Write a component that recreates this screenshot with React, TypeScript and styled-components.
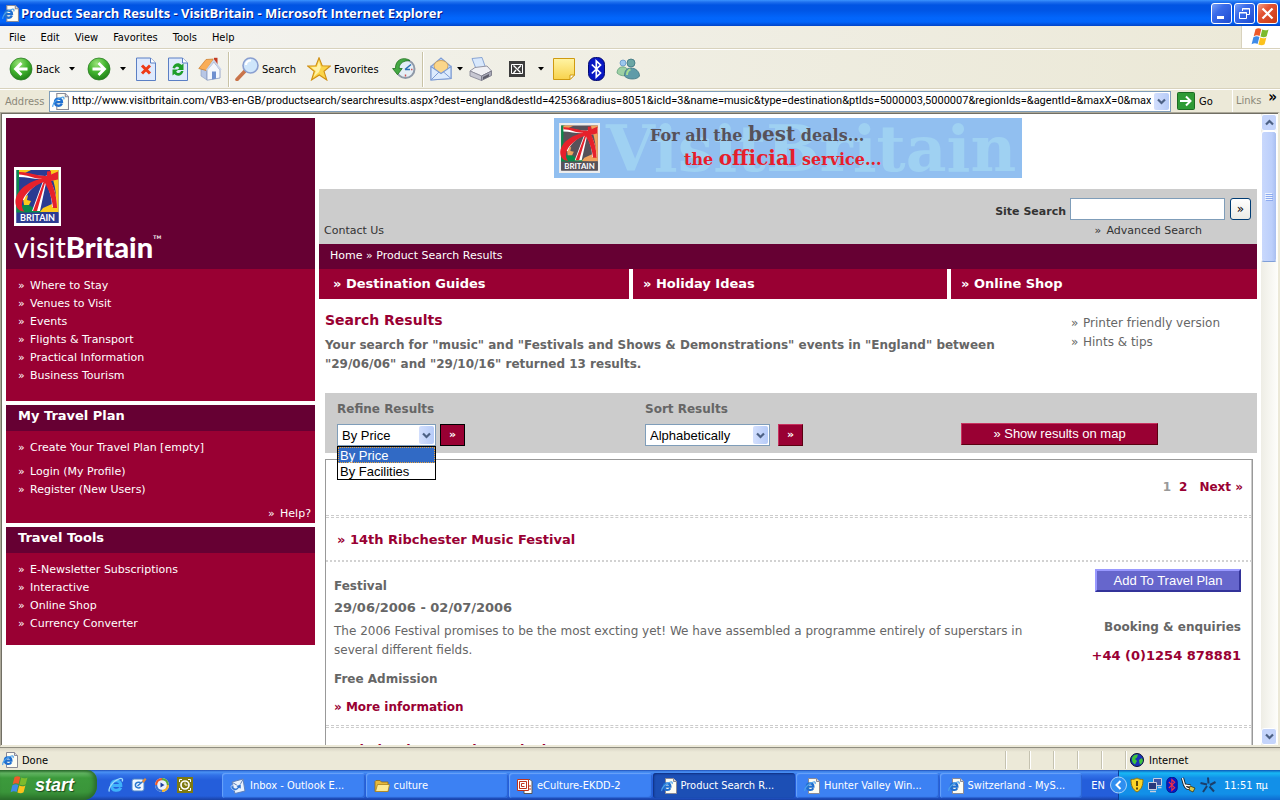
import React from "react";
import styled, { createGlobalStyle } from "styled-components";

const verdana = `Verdana, "DejaVu Sans", sans-serif`;
const tahoma = `Tahoma, "DejaVu Sans Condensed", "DejaVu Sans", sans-serif`;
const arial = `Arial, "Liberation Sans", sans-serif`;
const trebuchet = `"Trebuchet MS", "Open Sans", sans-serif`;
const slab = `"DejaVu Serif", serif`;

const GlobalStyle = createGlobalStyle`
  * { box-sizing: border-box; }
  body { margin: 0; background: #fff; font-family: ${verdana}; }
  button, input, select { font: inherit; color: inherit; margin: 0; }
  a { color: inherit; text-decoration: none; }
  a:hover { text-decoration: underline; }
  h1, h2, h3, p, ul { margin: 0; padding: 0; }
  ul { list-style: none; }
  svg { display: block; flex: none; }
`;

/* ---------- browser window ---------- */

const Desktop = styled.div`
  display: flex;
  flex-direction: column;
  height: 100vh;
  overflow: hidden;
  font-family: ${tahoma};
  font-size: 11px;
  color: #000;
`;

const TitleBar = styled.header`
  display: flex;
  align-items: center;
  gap: 2px;
  height: 26px;
  flex: none;
  padding: 0 2px;
  background: linear-gradient(#3a93ff 0, #1f70ee 2px, #0054e3 5px, #0055e5 10px, #0266fc 18px, #0265fb 22px, #0144c8 26px);
`;

const WindowTitle = styled.h1`
  flex: 1;
  font: bold 13px/20px ${trebuchet};
  color: #fff;
  text-shadow: 1px 1px 0 #0a1883;
`;

const CaptionButton = styled.button<{ $close?: boolean }>`
  display: flex;
  align-items: center;
  justify-content: center;
  width: 21px;
  height: 21px;
  padding: 0;
  border: 1px solid #fff;
  border-radius: 3px;
  background: ${(p) =>
    p.$close
      ? "linear-gradient(135deg, #f0a088, #e35434 35%, #c83a14)"
      : "linear-gradient(135deg, #7aa0f5, #3a6cea 35%, #1e4cd0)"};
`;

const MenuBar = styled.nav`
  display: flex;
  align-items: stretch;
  height: 23px;
  flex: none;
  border-bottom: 1px solid #d8d2bd;
  background: linear-gradient(90deg, #f4f4f2, #ece9d8);
`;

const MenuItems = styled.ul`
  display: flex;
  align-items: center;
  flex: 1;
  gap: 15px;
  padding-left: 9px;
`;

const PlainButton = styled.button`
  padding: 0;
  border: 0;
  background: none;
`;

const BrandCell = styled.div`
  display: flex;
  align-items: center;
  justify-content: center;
  width: 39px;
  border-left: 1px solid #d8d2bd;
  background: #fff;
`;

const ToolBar = styled.div`
  display: flex;
  align-items: center;
  height: 40px;
  flex: none;
  padding-left: 5px;
  border-top: 1px solid #fff;
  border-bottom: 1px solid #d8d2bd;
  background: linear-gradient(90deg, #f4f4f0, #ebe8d6);
`;

const ToolButton = styled.button<{ $w: number; $align?: string }>`
  display: flex;
  align-items: center;
  justify-content: ${(p) => p.$align ?? "center"};
  gap: 3px;
  width: ${(p) => p.$w}px;
  height: 32px;
  padding: 0 4px;
  border: 0;
  background: none;
  flex: none;
`;

const DropButton = styled.button<{ $w: number }>`
  display: flex;
  justify-content: center;
  width: ${(p) => p.$w}px;
  padding: 0;
  border: 0;
  background: none;
  flex: none;
`;

const BarDivider = styled.span`
  width: 2px;
  height: 35px;
  margin: 0 1px 0 2px;
  border-left: 1px solid #c9c3a6;
  border-right: 1px solid #fff;
`;

const AddressBar = styled.form`
  display: flex;
  align-items: center;
  height: 23px;
  flex: none;
  padding-left: 5px;
  border-top: 1px solid #fff;
  background: #ece9d8;
`;

const AddressLabel = styled.label`
  width: 44px;
  color: #8b8878;
`;

const AddressCombo = styled.div`
  display: flex;
  align-items: center;
  flex: 1;
  min-width: 0;
  height: 21px;
  gap: 3px;
  padding: 0 1px 0 2px;
  border: 1px solid #7f9db9;
  background: #fff;
`;

const AddressInput = styled.input`
  flex: 1;
  min-width: 0;
  padding: 0;
  border: 0;
  outline: 0;
  background: none;
  font: 11px/16px Tahoma, Roboto, sans-serif;
`;

const ArrowBox = styled.span<{ $h: number }>`
  display: flex;
  align-items: center;
  justify-content: center;
  width: 15px;
  height: ${(p) => p.$h}px;
  border-radius: 2px;
  background: linear-gradient(90deg, #d3dffd, #b6cbf8);
  flex: none;
`;

const GoButton = styled.button`
  display: flex;
  align-items: center;
  gap: 4px;
  width: 61px;
  padding: 0 0 0 6px;
  border: 0;
  background: none;
`;

const LinksCell = styled.div`
  display: flex;
  width: 48px;
  height: 22px;
  padding: 0 3px;
  justify-content: space-between;
  line-height: 22px;
  border-left: 1px solid #fff;
  color: #8b8878;
  strong { color: #000; font-size: 15px; line-height: 14px; }
`;

const Viewport = styled.div`
  display: flex;
  flex: 1;
  min-height: 0;
  border: solid #aca899;
  border-width: 1px 2px 2px 1px;
  border-right-color: #ece9d8;
  border-bottom-color: #ece9d8;
  box-shadow: inset 1px 1px 0 #716f64;
  background: #fff;
`;

const PageArea = styled.div`
  display: grid;
  grid-template-columns: 309px minmax(0, 1fr);
  column-gap: 4px;
  align-items: start;
  flex: 1;
  min-width: 0;
  overflow: hidden;
  margin: 1px 0 0 1px;
  padding: 4px 4px 0 4px;
  font-family: ${verdana};
`;

const ScrollTrack = styled.div`
  display: flex;
  flex-direction: column;
  width: 17px;
  flex: none;
  margin-top: 1px;
  padding-right: 1px;
  background: linear-gradient(90deg, #eeede5, #fefefb);
`;

const ScrollButton = styled.button`
  display: flex;
  align-items: center;
  justify-content: center;
  height: 17px;
  flex: none;
  padding: 0;
  border: 1px solid #fff;
  border-radius: 3px;
  background: #c4d4fb;
`;

const ScrollThumb = styled.div`
  display: flex;
  flex-direction: column;
  align-items: center;
  justify-content: center;
  height: 131px;
  border: 1px solid #fff;
  border-bottom: 1px solid #7f9fd8;
  border-radius: 3px;
  background: linear-gradient(90deg, #c9d8fc, #bccffb 70%, #a9bff0);
`;

const ScrollSpace = styled.div`
  flex: 1;
`;

/* ---------- left column ---------- */

const Sidebar = styled.aside`
  display: flex;
  flex-direction: column;
  gap: 4px;
  font-size: 11px;
  line-height: 18px;
  color: #fff;
`;

const SideBlock = styled.section`
  background: #990033;
`;

const SideBrand = styled.div`
  height: 151px;
  padding: 49px 8px 0;
  background: #660033;
`;

const WordMark = styled.div`
  display: flex;
  align-items: flex-start;
  margin-top: 4px;
  font: 400 29px/34px Lato, sans-serif;
  b { font-weight: 900; }
  sup { padding-top: 3px; font: 400 12px/14px Lato, sans-serif; }
`;

const SideTitle = styled.h2`
  height: 26px;
  padding-left: 12px;
  font-size: 13px;
  line-height: 21px;
  background: #660033;
`;

const SideList = styled.ul<{ $bottom: number }>`
  padding: 8px 4px ${(p) => p.$bottom}px 12px;
`;

const SideItem = styled.li<{ $gapAfter?: boolean; $end?: boolean }>`
  display: flex;
  justify-content: ${(p) => (p.$end ? "flex-end" : "flex-start")};
  padding-bottom: ${(p) => (p.$gapAfter ? 6 : 0)}px;
`;

const Chevron = styled.span`
  display: inline-block;
  width: 12px;
`;

/* ---------- main column ---------- */

const Main = styled.main`
  min-width: 0;
  color: #666;
  font-size: 12px;
  line-height: 19px;
`;

const BannerLink = styled.a`
  display: block;
  width: 468px;
  height: 60px;
  margin: 0 auto 11px;
`;

const UtilityBar = styled.div`
  height: 55px;
  padding: 9px 6px 0 5px;
  background: #ccc;
  color: #333;
  font-size: 11px;
  line-height: 20px;
`;

const SearchForm = styled.form`
  display: flex;
  align-items: center;
  justify-content: flex-end;
  height: 22px;
  label { margin-right: 4px; padding-top: 6px; font-weight: bold; }
`;

const SearchInput = styled.input`
  width: 155px;
  height: 22px;
  margin-right: 5px;
  padding: 0 3px;
  border: 1px solid #7f9db9;
  background: #fff;
`;

const SearchButton = styled.button`
  width: 21px;
  height: 22px;
  padding: 0;
  border: 1px solid #003c74;
  border-radius: 3px;
  background: linear-gradient(#fff, #ecebe5);
  color: #000;
  font-size: 12px;
`;

const UtilityLinks = styled.div`
  display: flex;
  justify-content: space-between;
  padding: 1px 49px 0 0;
`;

const Breadcrumb = styled.nav`
  height: 25px;
  padding-left: 11px;
  background: #660033;
  color: #fff;
  font-size: 11px;
  line-height: 23px;
`;

const Tabs = styled.nav`
  display: grid;
  grid-template-columns: 310fr 314fr 306fr;
  gap: 4px;
`;

const Tab = styled.a`
  padding-left: 10px;
  background: #990033;
  color: #fff;
  font-weight: bold;
  font-size: 13px;
  line-height: 30px;
  &:first-child { padding-left: 14px; }
`;

const Results = styled.div`
  padding-left: 6px;
`;

const ResultsHead = styled.div`
  display: flex;
  justify-content: space-between;
  padding-top: 12px;
  margin-bottom: 19px;
`;

const ResultsTitle = styled.h2`
  margin-bottom: 6px;
  color: #990033;
  font-size: 14px;
  line-height: 19px;
`;

const Summary = styled.p`
  max-width: 700px;
  font-weight: bold;
`;

const PageTools = styled.ul`
  width: 186px;
  padding-top: 3px;
  flex: none;
`;

const FilterBar = styled.div`
  display: grid;
  grid-template-columns: 308fr 316fr 296fr;
  height: 60px;
  padding: 7px 0 0 12px;
  background: #ccc;
`;

const FilterGroup = styled.form`
  label { display: block; margin-bottom: 6px; font-weight: bold; line-height: 18px; }
`;

const FilterControls = styled.div<{ $gap: number }>`
  display: flex;
  gap: ${(p) => p.$gap}px;
`;

const SelectBox = styled.div<{ $w: number }>`
  position: relative;
  display: flex;
  align-items: center;
  width: ${(p) => p.$w}px;
  height: 22px;
  padding-right: 1px;
  border: 1px solid #7f9db9;
  background: #fff;
  color: #000;
  font: 13px/16px ${arial};
`;

const Select = styled.select`
  appearance: none;
  flex: 1;
  min-width: 0;
  padding: 1px 0 0 4px;
  border: 0;
  outline: 0;
  background: none;
`;

const OptionList = styled.ul`
  position: absolute;
  left: -1px;
  top: 21px;
  right: -1px;
  border: 1px solid #000;
  background: #fff;
`;

const OptionItem = styled.li<{ $active?: boolean }>`
  height: 16px;
  padding-left: 2px;
  line-height: 17px;
  color: ${(p) => (p.$active ? "#fff" : "#000")};
  background: ${(p) => (p.$active ? "#316ac5" : "#fff")};
  outline: ${(p) => (p.$active ? "1px dotted #e8a33d" : "none")};
  outline-offset: -1px;
`;

const CrimsonButton = styled.button<{ $focus?: boolean }>`
  width: 25px;
  height: 22px;
  padding: 0;
  border: 1px solid;
  border-color: ${(p) => (p.$focus ? "#000" : "#c8325f #5a0010 #5a0010 #c8325f")};
  background: #990033;
  color: #fff;
  font: bold 11px/18px ${verdana};
`;

const MapButton = styled(CrimsonButton)`
  width: 197px;
  margin-top: 23px;
  font: 13px/18px ${arial};
`;

const ResultList = styled.div`
  margin: 6px 4px 0 0;
  border: 1px solid #999;
  border-bottom: 0;
  box-shadow: inset -1px 0 0 #ccc;
`;

const Pager = styled.nav`
  display: flex;
  justify-content: flex-end;
  height: 55px;
  padding-right: 9px;
  line-height: 55px;
  font-weight: bold;
  color: #990033;
  span { color: #999; margin-right: 8px; }
  a + a { margin-left: 12px; }
`;

const DashRule = styled.hr`
  height: 3px;
  margin: 0;
  border: 0 dashed #ccc;
  border-width: 1px 0;
`;

const DotRule = styled.hr`
  height: 2px;
  margin: 0;
  border: 0;
  background: repeating-linear-gradient(90deg, #d2d2d2 0 2px, transparent 2px 4px);
`;

const EntryTitle = styled.h3`
  height: 42px;
  padding: 1px 0 0 11px;
  color: #990033;
  font-size: 13px;
  line-height: 42px;
`;

const EntryBody = styled.div`
  display: flex;
  justify-content: space-between;
  padding: 7px 11px 8px 8px;
`;

const EntryText = styled.div`
  max-width: 724px;
  padding-top: 6px;
`;

const Strong = styled.p<{ $lh?: number }>`
  font-weight: bold;
  line-height: ${(p) => p.$lh ?? 19}px;
`;

const Dates = styled(Strong)`
  font-size: 13px;
`;

const Description = styled.p`
  margin: 3px 0 10px;
`;

const MoreLink = styled.a`
  display: block;
  margin-top: 9px;
  color: #990033;
  font-weight: bold;
`;

const EntrySide = styled.div`
  display: flex;
  flex-direction: column;
  align-items: flex-end;
  flex: none;
  gap: 9px;
`;

const PlanButton = styled.button`
  width: 146px;
  height: 23px;
  margin-bottom: 17px;
  padding: 0;
  border: 2px solid;
  border-color: #9999ff #333399 #333399 #9999ff;
  background: #6666cc;
  color: #fff;
  font: 13px/18px ${arial};
`;

const Phone = styled.p`
  color: #990033;
  font-size: 13px;
  font-weight: bold;
`;

/* ---------- status bar and task bar ---------- */

const StatusBar = styled.footer`
  display: flex;
  height: 23px;
  flex: none;
  padding-top: 2px;
  line-height: 21px;
  border-top: 1px solid #8f8d80;
  background: linear-gradient(#d8d4c4, #ece9d8 4px);
`;

const StatusText = styled.div`
  display: flex;
  align-items: center;
  flex: 1;
  gap: 4px;
  padding-left: 2px;
`;

const StatusCell = styled.div<{ $w: number }>`
  display: flex;
  align-items: center;
  gap: 5px;
  width: ${(p) => p.$w}px;
  padding-left: 4px;
  margin: 1px 0;
  border-left: 1px solid #c5c2b0;
  box-shadow: inset 1px 0 0 #fff;
`;

const TaskBar = styled.nav`
  display: flex;
  align-items: stretch;
  height: 30px;
  flex: none;
  background: linear-gradient(#1f4fb8 0, #4a92f5 2px, #3272e8 5px, #245edb 10px, #245edb 26px, #1941a5);
  color: #fff;
`;

const StartButton = styled.button`
  display: flex;
  align-items: center;
  gap: 5px;
  width: 97px;
  padding: 0 0 1px 10px;
  border: 0;
  border-radius: 0 10px 14px 0;
  background: linear-gradient(#2a6a2c 0, #64b764 3px, #3c9a3c 8px, #3a953a 22px, #2a702a);
  box-shadow: inset -3px 0 4px #2a6a2c;
  color: #fff;
  font: italic bold 18px/24px "Franklin Gothic Medium", "Liberation Sans", sans-serif;
  text-shadow: 1px 1px 1px #1c4a1c;
`;

const QuickLaunch = styled.div`
  display: flex;
  align-items: center;
  gap: 7px;
  width: 125px;
  padding-left: 11px;
`;

const TaskList = styled.div`
  display: flex;
  flex: 1;
  min-width: 0;
  gap: 1px;
  padding: 3px 0 2px;
`;

const Task = styled.button<{ $active?: boolean }>`
  display: flex;
  align-items: center;
  flex: 1;
  min-width: 0;
  gap: 4px;
  padding: 0 8px;
  border: 0;
  border-radius: 3px;
  background: ${(p) => (p.$active ? "#1c4fb5" : "#3c81f3")};
  box-shadow: ${(p) => (p.$active ? "inset 1px 1px 2px #0f2f80" : "inset 1px 1px 1px #6aa4fa, inset -1px -1px 1px #2a62d0")};
  color: #fff;
`;

const Language = styled.div`
  display: flex;
  align-items: center;
  justify-content: center;
  width: 36px;
  padding-right: 4px;
`;

const Tray = styled.div`
  display: flex;
  align-items: center;
  gap: 2px;
  width: 162px;
  background: linear-gradient(#0c59b9 0, #18b8f4 3px, #1290e8 8px, #1290e8 24px, #0e6ad0);
  border-left: 1px solid #0b3f9a;
  > svg:first-child { margin-left: -9px; }
  time { margin-left: 5px; }
`;

/* ---------- drawings ---------- */

const Down = ({ color = "#000" }: { color?: string }) => (
  <svg width="6" height="4" viewBox="0 0 6 4"><path d="M0 0h6L3 3.4z" fill={color} /></svg>
);

const Chev = ({ up }: { up?: boolean }) => (
  <svg width="9" height="7" viewBox="0 0 9 7">
    <path d={up ? "M1 5.5L4.5 2L8 5.5" : "M1 1.5L4.5 5L8 1.5"} fill="none" stroke="#4d6185" strokeWidth="2.2" />
  </svg>
);

const ESwirl = ({ size = 16 }: { size?: number }) => (
  <svg width={size} height={size} viewBox="0 0 16 16">
    <path d="M3.4 8.4h9.4C12.800 2.200 3.600 2.200 3.500 8.400c0 6 7.600 6 9.200 2.200" fill="none" stroke="#3fb2fa" strokeWidth="3" />
    <path d="M1.500 14.500C-.5 11.500 5.500 3.500 11 1.800c3.500-1.200 4 .5 3.200 2.600" fill="none" stroke="#9adafb" strokeWidth="1.400" />
  </svg>
);

const PageIE = ({ size = 16 }: { size?: number }) => (
  <svg width={size} height={size} viewBox="0 0 16 16">
    <path d="M4.500.5h8l3 3v12h-11z" fill="#fdfcf2" stroke="#8a8a96" />
    <path d="M12.500.5v3h3" fill="#d5d9e4" stroke="#8a8a96" />
    <path d="M2.800 8.600h6.600c0-4.400-6.600-4.400-6.600 0 0 4.200 5.200 4.200 6.500 1.600" fill="none" stroke="#1f6fd0" strokeWidth="2.200" />
    <path d="M.8 13C0 10 5 5 9.500 4c2-.4 2 .8 1.500 2" fill="none" stroke="#4aa0ea" strokeWidth="1.100" />
  </svg>
);

const XpFlag = ({ size = 20 }: { size?: number }) => (
  <svg width={size} height={size} viewBox="0 0 20 20">
    <path d="M4.500 2.200c2-1.400 4-1.200 5.800-.2L8.600 9C6.800 8 5 8 2.700 9.200z" fill="#ee5a2a" />
    <path d="M11.200 2.600c2 1 4.200 1 6.300-.1l-1.800 6.800c-2 1.200-4.200 1-6.200.1z" fill="#7cbb2d" />
    <path d="M2.400 10.200c2.200-1.200 4.200-1.200 6-.2l-1.800 7c-1.800-1-3.800-1-6 .2z" fill="#3f8be8" />
    <path d="M9.200 10.500c2 1 4.200 1 6.200-.1l-1.800 6.900c-2 1.200-4.200 1-6.200.1z" fill="#fcc21c" />
  </svg>
);

const RoundArrow = ({ flip, id }: { flip?: boolean; id: string }) => (
  <svg width="24" height="24" viewBox="0 0 24 24">
    <defs>
      <radialGradient id={id} cx=".4" cy=".25" r=".8">
        <stop offset="0" stopColor="#9be27a" /><stop offset=".5" stopColor="#43b52f" /><stop offset="1" stopColor="#1d7d16" />
      </radialGradient>
    </defs>
    <circle cx="12" cy="12" r="11" fill={`url(#${id})`} stroke="#2f7d27" strokeWidth=".8" />
    <path transform={flip ? "translate(24 0) scale(-1 1)" : undefined} d="M18.500 12H7M12.500 6L6.500 12l6 6" fill="none" stroke="#fff" strokeWidth="2.800" />
  </svg>
);

const DocShape = ({ children }: { children: React.ReactNode }) => (
  <svg width="20" height="24" viewBox="0 0 20 24">
    <path d="M.5 1h14l5 5v17.500H.5z" fill="#dfeafd" stroke="#5b7fc4" />
    <path d="M14.500 1v5h5" fill="#fff" stroke="#5b7fc4" />
    {children}
  </svg>
);

const HomeIcon = () => (
  <svg width="24" height="24" viewBox="0 0 24 24">
    <path d="M16 .8h3.500v7H16z" fill="#c23a22" />
    <path d="M3 12l6 1v10l-6-4z" fill="#b7c6e6" stroke="#8798c0" strokeWidth=".6" />
    <path d="M9 13l7-8 6 8v8l-13 2.200z" fill="#f4f7fd" stroke="#8798c0" strokeWidth=".8" />
    <path d="M14 14.500h4v7.200l-4 .7z" fill="#6f8fcf" />
    <path d="M.8 11.500L8 2.500 15.500 2 8.200 13.500z" fill="#f9ad58" stroke="#c97a28" strokeWidth=".7" />
    <path d="M8.500 13.500L15.800 3.500 23 13" fill="none" stroke="#c9d4ea" strokeWidth="1.800" />
  </svg>
);

const SearchGlass = () => (
  <svg width="24" height="24" viewBox="0 0 24 24">
    <path d="M2 22.500l8-8.500" stroke="#c9744a" strokeWidth="3.600" strokeLinecap="round" />
    <circle cx="15.500" cy="8.500" r="7.500" fill="#cfe6fb" stroke="#8a9fd0" strokeWidth="1.600" />
    <path d="M11 8c0-3 2-4.500 5-4.500" fill="none" stroke="#fff" strokeWidth="2.200" />
  </svg>
);

const StarIcon = () => (
  <svg width="24" height="24" viewBox="0 0 24 24">
    <path d="M12 .8l3.200 8 8.200.2-6.400 5.300L19.800 23 12.300 18 4.500 23l2.700-8.600L.6 9l8.300-.2z" fill="#fbd54a" stroke="#cf8f14" strokeWidth="1.100" />
    <path d="M12 4l1.800 6.200L12 15 6.500 20l2.300-6L4 10.200l5.800-.2z" fill="#fff2a8" />
  </svg>
);

const HistoryIcon = () => (
  <svg width="24" height="24" viewBox="0 0 24 24">
    <circle cx="13.500" cy="12" r="9" fill="#e4eef6" stroke="#8f99a8" strokeWidth="2" />
    <path d="M13 12.500l6-5M13 12.500h5" stroke="#2c6fb5" strokeWidth="1.500" />
    <path d="M18 3.500C11-1 3 3 3.500 11.500H.6l4.900 6.200 4.700-6.200H7.200C7 6 12 3.500 18 3.500z" fill="#45a843" stroke="#1f7420" strokeWidth=".8" />
    <path d="M13.500 19.500v-2M20.500 12.500h-1.500" stroke="#d05050" strokeWidth="1.400" />
  </svg>
);

const MailIcon = () => (
  <svg width="22" height="24" viewBox="0 0 22 24">
    <path d="M1 9.500L11 1l10 8.500v12L1 23z" fill="#c7dcf8" stroke="#7d9cd4" strokeWidth="1.100" />
    <path d="M4 8C6 2 16 2 18 8l-1 6-6 3-6-3z" fill="#fbd68a" stroke="#cf9a4a" strokeWidth=".8" />
    <path d="M1 9.500l10 7 10-7v12L1 23z" fill="#dcebfd" stroke="#7d9cd4" strokeWidth="1.100" />
    <path d="M1 23l8-8M21 21.500l-8-7" stroke="#7d9cd4" />
  </svg>
);

const PrinterIcon = () => (
  <svg width="24" height="24" viewBox="0 0 24 24">
    <path d="M3 1.500l10-1 3.500 10-9 2.500z" fill="#d8e8fc" stroke="#7f9dd0" strokeWidth=".9" />
    <path d="M1 14l5-3.500 12-1.500 4.500 5-10 5z" fill="#f1f1f4" stroke="#8a8a98" strokeWidth=".9" />
    <path d="M1 14l11.500 5v4.500L1 19z" fill="#c7c7d2" stroke="#8a8a98" strokeWidth=".9" />
    <path d="M12.500 19l10-5v4.500l-10 5z" fill="#a7a7b6" stroke="#7a7a88" strokeWidth=".9" />
    <path d="M14 20l6-3v2.500l-6 3z" fill="#5d5d6a" />
  </svg>
);

const SquareIcon = () => (
  <svg width="16" height="16" viewBox="0 0 16 16">
    <path d="M0 0h16v16H0z" fill="#3c3c3c" />
    <path d="M2.500 3.500h11v9h-11z" fill="none" stroke="#fff" />
    <path d="M4.500 4.500l7 7M12 4.500L9 7.500M4.500 12L7 9" fill="none" stroke="#fff" strokeWidth="1.300" />
  </svg>
);

const NoteIcon = () => (
  <svg width="22" height="22" viewBox="0 0 22 22">
    <defs>
      <linearGradient id="note" x2="0" y2="1"><stop stopColor="#fff4a4" /><stop offset="1" stopColor="#f8d24c" /></linearGradient>
    </defs>
    <path d="M.5.500h21V17L17 21.500H.5z" fill="url(#note)" stroke="#cf9a10" />
    <path d="M17 21.500V17h4.500z" fill="#fff" stroke="#cf9a10" />
  </svg>
);

const Bluetooth = ({ w = 17, h = 24, color = "#fff" }: { w?: number; h?: number; color?: string }) => (
  <svg width={w} height={h} viewBox="0 0 17 24">
    <rect x=".5" y=".5" width="16" height="23" rx="7" fill="#0818c4" stroke="#040a70" />
    <path d="M3.800 7.500l8.700 8.500-4.200 4V4l4.200 4-8.700 8.500" fill="none" stroke={color} strokeWidth="1.700" />
  </svg>
);

const BuddyIcon = () => (
  <svg width="24" height="22" viewBox="0 0 24 22">
    <circle cx="7" cy="5" r="3" fill="#9cc8ee" stroke="#5a8cc0" strokeWidth=".7" />
    <path d="M1 15c0-8 11-8 11-1v3c-3 1.500-8 1-11-2z" fill="#9ed0a4" stroke="#5a9a78" strokeWidth=".7" />
    <circle cx="15" cy="5" r="4" fill="#6ba6a4" stroke="#3c7480" strokeWidth=".8" />
    <path d="M8.500 18c0-5 2-8 6.500-8s8.500 3.500 8.500 8c-2 4-12 4-15 0z" fill="#5f9ba8" stroke="#3c7480" strokeWidth=".8" />
    <path d="M11 17c0-3 1.500-5 3.500-5.500" fill="none" stroke="#a6dc90" strokeWidth="2" />
  </svg>
);

const GoIcon = () => (
  <svg width="18" height="18" viewBox="0 0 18 18">
    <rect x=".5" y=".5" width="17" height="17" rx="1" fill="#2f9a35" stroke="#1d6b22" />
    <path d="M3 9h10M9 4.500L13.500 9 9 13.500" fill="none" stroke="#fff" strokeWidth="2" />
  </svg>
);

const Globe = () => (
  <svg width="14" height="14" viewBox="0 0 14 14">
    <circle cx="7" cy="7" r="6.500" fill="#1a34b8" stroke="#0a1034" />
    <path d="M2 5c1-3 4-4 6-3.500L7 4.500 5 6l2 2-2 3.500C3 10.500 1.500 8 2 5zM9 7l3-2 1 3-2 3.500-1.500-1z" fill="#3fc43a" />
  </svg>
);

const BritainLogo = ({ muted, width, height }: { muted?: boolean; width: number; height: number }) => {
  const blue = muted ? "#575159" : "#2b3b92";
  const gold = muted ? "#f0a25c" : "#fbc91c";
  return (
    <svg width={width} height={height} viewBox="0 0 47 59" preserveAspectRatio="none">
      <path d="M0 0h47v59H0z" fill={muted ? "#ececec" : "#fff"} />
      <path d="M2.500 3h42v53h-42z" fill={blue} />
      <path d="M2.500 3h4C4 12 6 22 4 45H2.500z" fill="#0a8a4a" />
      <path d="M38 3h6.500v42H33c6-6 9-3 9-14 0-10-3-19-6-28z" fill={gold} />
      <path d="M5 3h12l-6 3H5z" fill={gold} />
      <path d="M2.500 38c4 3 8-2 12 0s8 6 18 5l-6 3h-24z" fill="#0a8a4a" />
      <path d="M9 31l5-3-1 5 4 1-2 4h-5z" fill={gold} />
      <path d="M29 41l9-4 4 3v5H26z" fill={gold} />
      <path d="M31 9C20 9 12 6 5 6v4c8 0 17 3 24 2C18 17 8 24 6 33h4C14 24 22 17 29 14L18 44h8l6-28c4 8 6 16 6 24h5c0-10-3-20-7-26l8-2V6z" fill="#fff" />
      <path d="M33 9C22 9 14 4.500 5 5v2.500c8 0 16 5 23 4C13 15 1 24 1.500 36c.5 5 4 9 9 8.500-7-8 1-22 19-29.500L19 44h4l8-28c4 7 7 15 8 25h4c0-11-3-20-6-27l7-1.500V4.500l-7 3V4l-4 .500z" fill="#e6212b" />
      <path d="M2.500 45.500h42V56h-42z" fill={blue} />
      <text x="23.500" y="54.300" textAnchor="middle" fontFamily="Lato, sans-serif" fontWeight="700" fontSize="9" fill="#fff">BRITAIN</text>
    </svg>
  );
};

const Banner = () => (
  <svg width="468" height="60" viewBox="0 0 468 60" role="img" aria-label="VisitBritain banner">
    <path d="M0 0h468v60H0z" fill="#91bff0" />
    <text x="52" y="53" fontFamily={slab} fontWeight="bold" fontSize="63" fill="#9fd1f2">VisitBritain</text>
    <g transform="translate(5 5)"><BritainLogo muted width={41} height={50} /></g>
    <g fontFamily={slab} fontWeight="bold" fontSize="16">
      <text x="96" y="23" fill="#57525a">For all the <tspan fontSize="20">best</tspan> deals...</text>
      <text x="130" y="47" fill="#e61e2c">the <tspan fontSize="20">official</tspan> service...</text>
    </g>
  </svg>
);

const CaptionGlyph = ({ kind }: { kind: "min" | "restore" | "close" }) => (
  <svg width="15" height="15" viewBox="0 0 15 15" fill="none" stroke="#fff">
    {kind === "min" && <path d="M3 11.500h7" strokeWidth="3" />}
    {kind === "restore" && <path d="M5.500 5V2.500h7v6H10M5 3h8M2.500 6.500h7v6h-7zM2 7h8" />}
    {kind === "close" && <path d="M2.500 2.500l10 10M12.500 2.500l-10 10" strokeWidth="2.200" />}
  </svg>
);

const OutlookIcon = () => (
  <svg width="16" height="16" viewBox="0 0 16 16">
    <path d="M2 4l11-3 2 12-10 2.500z" fill="#e8f1fd" stroke="#5f7fb8" />
    <path d="M2.500 4.500l6.500 4 4-7" fill="none" stroke="#5f7fb8" />
    <path d="M1 8c0 5 6 6 8 2l2 1V6L6 8l1.500 1C6.500 11 3 11 3 7z" fill="#2d72d2" stroke="#fff" strokeWidth=".5" />
  </svg>
);

const FolderIcon = () => (
  <svg width="16" height="16" viewBox="0 0 16 16">
    <path d="M1 3.500l1-1h4l1.500 1.500H14v9.500H1z" fill="#e5b93c" stroke="#8f6b14" strokeWidth=".8" />
    <path d="M3.500 6.500H15.500l-1.500 7H1.500z" fill="#fdeb94" stroke="#a8811e" strokeWidth=".8" />
  </svg>
);

const SlidesIcon = () => (
  <svg width="16" height="16" viewBox="0 0 16 16">
    <path d="M7 1.500h6l2 2v12H7z" fill="#fff" stroke="#555" />
    <path d="M.5 1.500h11v11H.5z" fill="#fff" stroke="#c0341c" />
    <path d="M2.500 3.500h7v7h-7z" fill="#fff" stroke="#c0341c" />
    <path d="M7.500 5.500h-3v3h3M11 8h3M12 11h2" fill="none" stroke="#c0341c" />
  </svg>
);

const DeskIcon = () => (
  <svg width="16" height="16" viewBox="0 0 16 16">
    <rect x="1" y="2" width="12" height="12" rx="2" fill="#f1f7ff" stroke="#4b82c8" />
    <path d="M9.500 5.500C5 4.500 4 7 4.500 9s4 2.500 5 1M6.500 9L14 2.500" fill="none" stroke="#2b78d0" strokeWidth="1.500" />
    <path d="M11 4l3-3 1.500 1.500L12.500 6z" fill="#e08a3c" />
  </svg>
);

const MediaIcon = () => (
  <svg width="16" height="16" viewBox="0 0 16 16">
    <circle cx="8" cy="8" r="7" fill="#fff" />
    <path d="M8 1a7 7 0 0 0-7 7h3a4 4 0 0 1 4-4z" fill="#e8572a" />
    <path d="M8 1a7 7 0 0 1 7 7h-3a4 4 0 0 0-4-4z" fill="#58a838" />
    <path d="M1 8a7 7 0 0 0 7 7v-3a4 4 0 0 1-4-4z" fill="#3a72d0" />
    <path d="M15 8a7 7 0 0 1-7 7v-3a4 4 0 0 0 4-4z" fill="#f0b02c" />
    <circle cx="8" cy="8" r="4.800" fill="#eaf2ff" />
    <path d="M6.500 5.500L10.500 8l-4 2.500z" fill="#1c3f9c" />
  </svg>
);

const ClockIcon = () => (
  <svg width="16" height="16" viewBox="0 0 16 16">
    <path d="M0 0h16v16H0z" fill="#7f7a10" />
    <path d="M5 2.500H2.500V5M11 2.500h2.500V5M5 13.500H2.500V11M11 13.500h2.500V11" fill="none" stroke="#fff" />
    <circle cx="8" cy="8" r="4" fill="none" stroke="#fff" strokeWidth="1.700" />
    <path d="M8 5.500V8h2.500" fill="none" stroke="#fff" />
  </svg>
);

const TrayArrow = () => (
  <svg width="17" height="18" viewBox="0 0 17 18">
    <circle cx="8.500" cy="9" r="8" fill="#2f8ff0" stroke="#b9dcfb" strokeWidth=".9" />
    <path d="M10.500 5L6.500 9l4 4" fill="none" stroke="#fff" strokeWidth="2" />
  </svg>
);

const ShieldIcon = () => (
  <svg width="16" height="16" viewBox="0 0 16 16">
    <path d="M8 1c2 1.200 4 1.500 6 1.500 0 6-1.500 10-6 12.500C3.500 12.500 2 8.500 2 2.500 4 2.500 6 2.200 8 1z" fill="#fbd428" stroke="#8d7412" />
    <path d="M8 4v5M8 10.500v2" stroke="#4a3a08" strokeWidth="1.800" />
  </svg>
);

const NetworkIcon = () => (
  <svg width="16" height="16" viewBox="0 0 16 16">
    <path d="M6.500 1.500h8v7h-8z" fill="#3b54a8" stroke="#c7cede" />
    <path d="M1.500 5.500h8v7h-8z" fill="#28387c" stroke="#c7cede" />
    <path d="M3 14.500h6M11 10.500h3.500" stroke="#c7cede" strokeWidth="1.500" />
  </svg>
);

const PlugIcon = () => (
  <svg width="16" height="16" viewBox="0 0 16 16">
    <path d="M1.500 1l2 7 6 1M3.500 8c2 4 4 4 6 3" fill="none" stroke="#1a1a1a" strokeWidth="3" />
    <path d="M1.500 1l2 7 6 1M3.500 8c2 4 4 4 6 3" fill="none" stroke="#fff" strokeWidth="1.300" />
    <path d="M9 9l5 2-2 4-4-2z" fill="#d9c84a" stroke="#3a3410" strokeWidth=".8" />
  </svg>
);

const BurstIcon = () => (
  <svg width="18" height="18" viewBox="0 0 18 18">
    <path d="M9 1.500l.5 6M1.500 7l6.500 1.500M16.500 6l-5.500 3M4 16l4-6M15 15.500L10.500 10.500" stroke="#1b3f6c" strokeWidth="2" />
  </svg>
);

/* ---------- data ---------- */

const menus = ["File", "Edit", "View", "Favorites", "Tools", "Help"];
const visitLinks = ["Where to Stay", "Venues to Visit", "Events", "Flights & Transport", "Practical Information", "Business Tourism"];
const toolLinks = ["E-Newsletter Subscriptions", "Interactive", "Online Shop", "Currency Converter"];
const url =
  "http://www.visitbritain.com/VB3-en-GB/productsearch/searchresults.aspx?dest=england&destId=42536&radius=8051&icId=3&name=music&type=destination&ptIds=5000003,5000007&regionIds=&agentId=&maxX=0&max";

const SideLink = ({ text, gapAfter, end }: { text: string; gapAfter?: boolean; end?: boolean }) => (
  <SideItem $gapAfter={gapAfter} $end={end}>
    <a href="#"><Chevron>»</Chevron>{text}</a>
  </SideItem>
);

export default function App() {
  return (
    <Desktop>
      <GlobalStyle />
      <TitleBar>
        <PageIE size={17} />
        <WindowTitle>Product Search Results - VisitBritain - Microsoft Internet Explorer</WindowTitle>
        <CaptionButton aria-label="Minimize"><CaptionGlyph kind="min" /></CaptionButton>
        <CaptionButton aria-label="Restore"><CaptionGlyph kind="restore" /></CaptionButton>
        <CaptionButton aria-label="Close" $close><CaptionGlyph kind="close" /></CaptionButton>
      </TitleBar>

      <MenuBar>
        <MenuItems>
          {menus.map((m) => <li key={m}><PlainButton>{m}</PlainButton></li>)}
        </MenuItems>
        <BrandCell><XpFlag /></BrandCell>
      </MenuBar>

      <ToolBar>
        <ToolButton $w={59} $align="flex-start"><RoundArrow id="back" />Back</ToolButton>
        <DropButton $w={15} aria-label="Back history"><Down /></DropButton>
        <ToolButton $w={36} $align="flex-end" aria-label="Forward"><RoundArrow id="forward" flip /></ToolButton>
        <DropButton $w={15} aria-label="Forward history"><Down /></DropButton>
        <ToolButton $w={32} aria-label="Stop">
          <DocShape><path d="M6 8.500l8 8M14 8.500l-8 8" stroke="#ee3a18" strokeWidth="3" /></DocShape>
        </ToolButton>
        <ToolButton $w={32} aria-label="Refresh">
          <DocShape>
            <path d="M4.500 11c1-5 6.500-6 9-3l2-1.500V13H9l2.300-1.800C10 9 7.500 9.500 7 11.500zM15.500 14c-1 5-6.500 6-9 3l-2 1.500V12.500h6l-2.300 2C9.500 17 12.500 16 13 14z" fill="#1f9e2a" />
          </DocShape>
        </ToolButton>
        <ToolButton $w={32} aria-label="Home"><HomeIcon /></ToolButton>
        <BarDivider />
        <ToolButton $w={72} $align="flex-start"><SearchGlass />Search</ToolButton>
        <ToolButton $w={84} $align="flex-start"><StarIcon />Favorites</ToolButton>
        <ToolButton $w={33} aria-label="History"><HistoryIcon /></ToolButton>
        <BarDivider />
        <ToolButton $w={32} aria-label="Mail"><MailIcon /></ToolButton>
        <DropButton $w={5} aria-label="Mail options"><Down /></DropButton>
        <ToolButton $w={37} aria-label="Print"><PrinterIcon /></ToolButton>
        <ToolButton $w={36} aria-label="Edit"><SquareIcon /></ToolButton>
        <DropButton $w={11} aria-label="Edit options"><Down /></DropButton>
        <ToolButton $w={36} aria-label="Discuss"><NoteIcon /></ToolButton>
        <ToolButton $w={28} aria-label="Bluetooth"><Bluetooth /></ToolButton>
        <ToolButton $w={36} aria-label="Messenger"><BuddyIcon /></ToolButton>
      </ToolBar>

      <AddressBar>
        <AddressLabel htmlFor="address">Address</AddressLabel>
        <AddressCombo>
          <PageIE size={17} />
          <AddressInput id="address" defaultValue={url} />
          <ArrowBox $h={17}><Chev /></ArrowBox>
        </AddressCombo>
        <GoButton type="button"><GoIcon />Go</GoButton>
        <LinksCell>Links<strong>»</strong></LinksCell>
      </AddressBar>

      <Viewport>
        <PageArea>
          <Sidebar>
            <SideBlock>
              <SideBrand>
                <BritainLogo width={47} height={59} />
                <WordMark>visit<b>Britain</b><sup>™</sup></WordMark>
              </SideBrand>
              <SideList $bottom={16}>
                {visitLinks.map((t) => <SideLink key={t} text={t} />)}
              </SideList>
            </SideBlock>
            <SideBlock>
              <SideTitle>My Travel Plan</SideTitle>
              <SideList $bottom={0}>
                <SideLink text="Create Your Travel Plan [empty]" gapAfter />
                <SideLink text="Login (My Profile)" />
                <SideLink text="Register (New Users)" gapAfter />
                <SideLink text="Help?" end />
              </SideList>
            </SideBlock>
            <SideBlock>
              <SideTitle>Travel Tools</SideTitle>
              <SideList $bottom={12}>
                {toolLinks.map((t) => <SideLink key={t} text={t} />)}
              </SideList>
            </SideBlock>
          </Sidebar>

          <Main>
            <BannerLink href="#"><Banner /></BannerLink>
            <UtilityBar>
              <SearchForm>
                <label htmlFor="site-search">Site Search</label>
                <SearchInput id="site-search" />
                <SearchButton type="button" aria-label="Search the site">»</SearchButton>
              </SearchForm>
              <UtilityLinks>
                <a href="#">Contact Us</a>
                <a href="#"><Chevron>»</Chevron>Advanced Search</a>
              </UtilityLinks>
            </UtilityBar>
            <Breadcrumb><a href="#">Home</a> » Product Search Results</Breadcrumb>
            <Tabs>
              <Tab href="#">» Destination Guides</Tab>
              <Tab href="#">» Holiday Ideas</Tab>
              <Tab href="#">» Online Shop</Tab>
            </Tabs>

            <Results>
              <ResultsHead>
                <div>
                  <ResultsTitle>Search Results</ResultsTitle>
                  <Summary>
                    Your search for "music" and "Festivals and Shows &amp; Demonstrations" events in "England" between
                    "29/06/06" and "29/10/16" returned 13 results.
                  </Summary>
                </div>
                <PageTools>
                  <li><a href="#"><Chevron>»</Chevron>Printer friendly version</a></li>
                  <li><a href="#"><Chevron>»</Chevron>Hints &amp; tips</a></li>
                </PageTools>
              </ResultsHead>

              <FilterBar>
                <FilterGroup>
                  <label htmlFor="refine">Refine Results</label>
                  <FilterControls $gap={4}>
                    <SelectBox $w={99}>
                      <Select id="refine" defaultValue="By Price">
                        <option>By Price</option>
                        <option>By Facilities</option>
                      </Select>
                      <ArrowBox $h={18}><Chev /></ArrowBox>
                      <OptionList>
                        <OptionItem $active>By Price</OptionItem>
                        <OptionItem>By Facilities</OptionItem>
                      </OptionList>
                    </SelectBox>
                    <CrimsonButton type="button" $focus aria-label="Refine">»</CrimsonButton>
                  </FilterControls>
                </FilterGroup>
                <FilterGroup>
                  <label htmlFor="sort">Sort Results</label>
                  <FilterControls $gap={8}>
                    <SelectBox $w={125}>
                      <Select id="sort" defaultValue="Alphabetically">
                        <option>Alphabetically</option>
                      </Select>
                      <ArrowBox $h={18}><Chev /></ArrowBox>
                    </SelectBox>
                    <CrimsonButton type="button" aria-label="Sort">»</CrimsonButton>
                  </FilterControls>
                </FilterGroup>
                <div>
                  <MapButton type="button">» Show results on map</MapButton>
                </div>
              </FilterBar>

              <ResultList>
                <Pager aria-label="Pages">
                  <span>1</span><a href="#">2</a><a href="#">Next »</a>
                </Pager>
                <DashRule />
                <article>
                  <EntryTitle><a href="#">» 14th Ribchester Music Festival</a></EntryTitle>
                  <DotRule />
                  <EntryBody>
                    <EntryText>
                      <Strong $lh={22}>Festival</Strong>
                      <Dates $lh={22}>29/06/2006 - 02/07/2006</Dates>
                      <Description>
                        The 2006 Festival promises to be the most excting yet! We have assembled a programme entirely of superstars in
                        several different fields.
                      </Description>
                      <Strong>Free Admission</Strong>
                      <MoreLink href="#">» More information</MoreLink>
                    </EntryText>
                    <EntrySide>
                      <PlanButton>Add To Travel Plan</PlanButton>
                      <Strong>Booking &amp; enquiries</Strong>
                      <Phone>+44 (0)1254 878881</Phone>
                    </EntrySide>
                  </EntryBody>
                </article>
                <DashRule />
                <article>
                  <EntryTitle><a href="#">» Cheltenham Music Festival</a></EntryTitle>
                </article>
              </ResultList>
            </Results>
          </Main>
        </PageArea>
        <ScrollTrack>
          <ScrollButton aria-label="Scroll up"><Chev up /></ScrollButton>
          <ScrollThumb>
            <svg width="8" height="8" viewBox="0 0 8 8">
              <path d="M0 .5h7M0 2.500h7M0 4.500h7M0 6.500h7" stroke="#eef4fe" />
              <path d="M1 1.500h7M1 3.500h7M1 5.500h7M1 7.500h7" stroke="#8caaf0" />
            </svg>
          </ScrollThumb>
          <ScrollSpace />
          <ScrollButton aria-label="Scroll down"><Chev /></ScrollButton>
        </ScrollTrack>
      </Viewport>

      <StatusBar>
        <StatusText><PageIE />Done</StatusText>
        <StatusCell $w={24} /><StatusCell $w={24} /><StatusCell $w={24} /><StatusCell $w={24} /><StatusCell $w={24} />
        <StatusCell $w={155}><Globe />Internet</StatusCell>
      </StatusBar>

      <TaskBar>
        <StartButton><XpFlag />start</StartButton>
        <QuickLaunch><ESwirl /><DeskIcon /><MediaIcon /><ClockIcon /></QuickLaunch>
        <TaskList>
          <Task><OutlookIcon />Inbox - Outlook E...</Task>
          <Task><FolderIcon />culture</Task>
          <Task><SlidesIcon />eCulture-EKDD-2</Task>
          <Task $active><PageIE />Product Search R...</Task>
          <Task><PageIE />Hunter Valley Win...</Task>
          <Task><PageIE />Switzerland - MyS...</Task>
        </TaskList>
        <Language>EN</Language>
        <Tray>
          <TrayArrow />
          <ShieldIcon /><NetworkIcon /><Bluetooth w={14} h={16} color="#f03048" /><PlugIcon /><BurstIcon />
          <time>11:51 πμ</time>
        </Tray>
      </TaskBar>
    </Desktop>
  );
}
